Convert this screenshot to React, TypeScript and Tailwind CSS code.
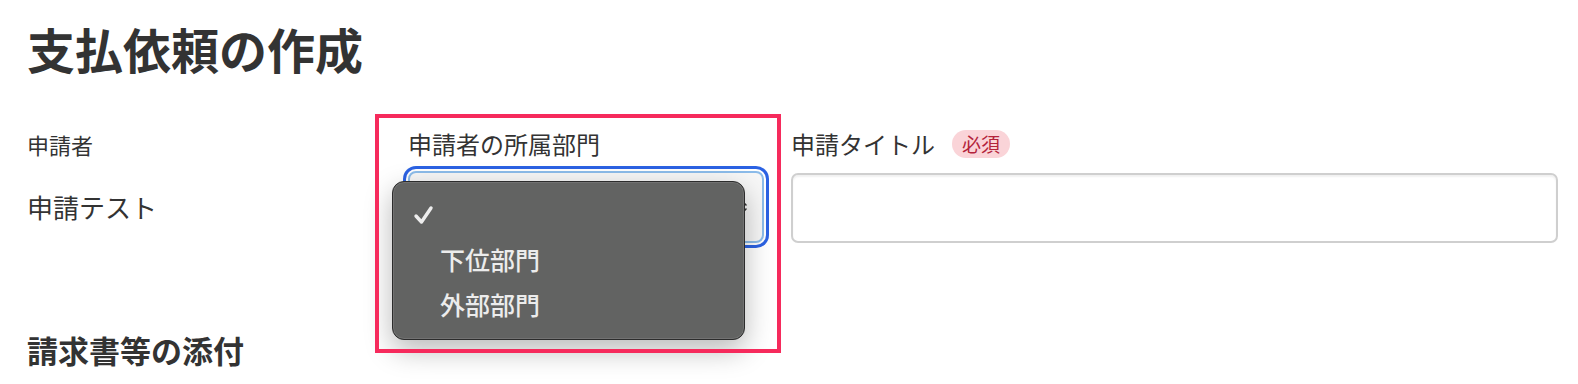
const font = { fontFamily: '"Noto Sans CJK JP", "Noto Sans", sans-serif' };

function Chevrons() {
  return (
    <svg width="10" height="16" viewBox="0 0 10 16" fill="none" stroke="#333" strokeWidth="1.6" strokeLinecap="round" strokeLinejoin="round">
      <path d="M2 6 L5 3 L8 6" />
      <path d="M2 10 L5 13 L8 10" />
    </svg>
  );
}

function Check() {
  return (
    <svg width="21" height="20" viewBox="0 0 21 20" fill="none" stroke="#ededed" strokeWidth="3.4" strokeLinecap="round" strokeLinejoin="round">
      <path d="M3 11 L8.5 17 L18 3" />
    </svg>
  );
}

export default function App() {
  const options = ['下位部門', '外部部門'];

  return (
    <div className="min-h-[384px] bg-white pl-[27px] pr-[20px] pt-[19px] text-[#333]" style={font}>
      <h1 className="text-[48px] font-bold leading-[58px]">支払依頼の作成</h1>

      <div className="mt-[51px] grid grid-cols-[354px_356px_1fr] gap-x-[27px]">
        <div>
          <div className="text-[22px] leading-[32px]">申請者</div>
          <div className="mt-[29px] text-[26px] leading-[36px]">申請テスト</div>
        </div>

        <div className="relative">
          <div className="text-[24px] leading-[32px]">申請者の所属部門</div>
          <div className="mt-[11px] flex h-[72px] w-full items-center justify-end rounded-[8px] border-2 border-[#8cbcea] bg-[#f7f7f7] pr-[14px] ring-[3px] ring-[#2b62e3] ring-offset-2 ring-offset-white">
            <Chevrons />
          </div>

          {/* native popup menu */}
          <div className="absolute left-[-16px] top-[53px] z-10 w-[353px] rounded-[12px] border border-[#2c2c2c] bg-[#626362] pt-[10px] pb-[12px] shadow-[0_10px_28px_rgba(0,0,0,0.28),inset_0_0_0_1px_rgba(255,255,255,0.1)]">
            <div className="flex h-[45px] items-center pl-[20px]">
              <Check />
            </div>
            {options.map((o) => (
              <div key={o} className="flex h-[45px] items-center pl-[47px] text-[25px] font-medium text-[#ececec]">
                {o}
              </div>
            ))}
          </div>

          {/* annotation frame */}
          <div className="pointer-events-none absolute left-[-33px] top-[-14px] z-20 h-[239px] w-[406px] border-4 border-[#f62a5c]" />
        </div>

        <div>
          <div className="flex h-[32px] items-center">
            <span className="text-[24px] leading-[32px]">申請タイトル</span>
            <span className="ml-[17px] rounded-full bg-[#fad4d8] px-[10px] text-[19px] leading-[28px] text-[#b3233b]">必須</span>
          </div>
          <div className="mt-[13px] h-[70px] rounded-[7px] border-2 border-[#cfcfcf] bg-white shadow-[inset_0_2px_2px_rgba(0,0,0,0.06)]" />
        </div>
      </div>

      <h2 className="mt-[87px] text-[31px] font-bold leading-[40px]">請求書等の添付</h2>
    </div>
  );
}
